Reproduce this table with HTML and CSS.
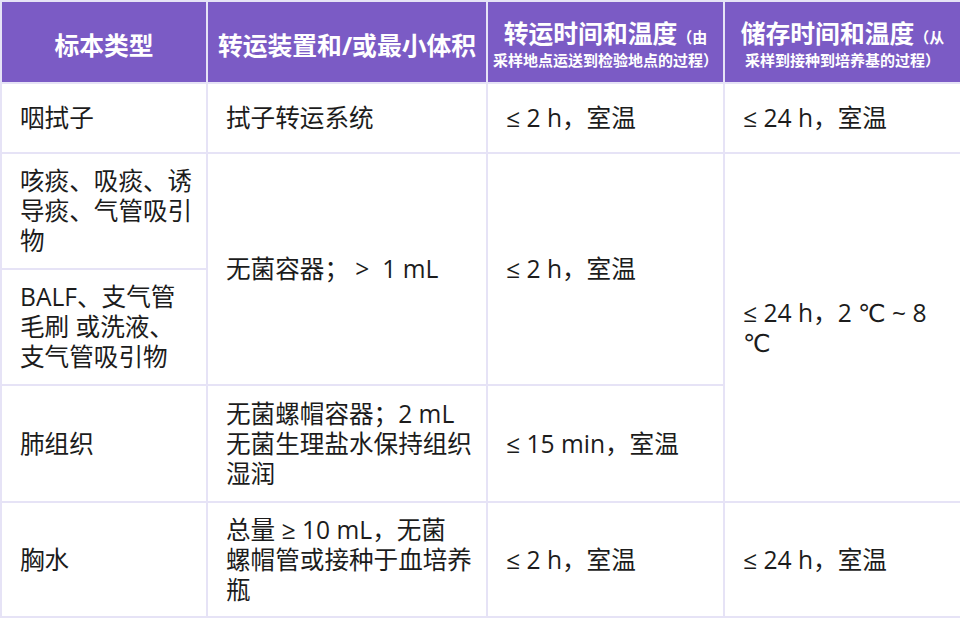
FILE: index.html
```html
<!DOCTYPE html>
<html lang="zh">
<head>
<meta charset="utf-8">
<title>标本类型</title>
<link rel="stylesheet" href="styles.css">
</head>
<body>
<table class="spec">
  <colgroup>
    <col class="c1"><col class="c2"><col class="c3"><col class="c4">
  </colgroup>
  <thead>
    <tr class="r-head">
      <th>标本类型</th>
      <th>转运装置和/或最小体积</th>
      <th><span class="h-main">转运时间和温度<small>（由</small></span><span class="h-sub">采样地点运送到检验地点的过程）</span></th>
      <th><span class="h-main">储存时间和温度<small>（从</small></span><span class="h-sub">采样到接种到培养基的过程）</span></th>
    </tr>
  </thead>
  <tbody>
    <tr class="r1">
      <td>咽拭子</td>
      <td>拭子转运系统</td>
      <td>≤ 2 h，室温</td>
      <td>≤ 24 h，室温</td>
    </tr>
    <tr class="r2">
      <td>咳痰、吸痰、诱<br>导痰、气管吸引<br>物</td>
      <td rowspan="2">无菌容器；&nbsp;&gt;&nbsp; 1 mL</td>
      <td rowspan="2">≤ 2 h，室温</td>
      <td rowspan="3" class="wrap">≤ 24 h，2 ℃ ~ 8 ℃</td>
    </tr>
    <tr class="r3">
      <td>BALF、支气管<br>毛刷 或洗液、<br>支气管吸引物</td>
    </tr>
    <tr class="r4">
      <td>肺组织</td>
      <td>无菌螺帽容器；2 mL<br>无菌生理盐水保持组织<br>湿润</td>
      <td>≤ 15 min，室温</td>
    </tr>
    <tr class="r5">
      <td>胸水</td>
      <td>总量 ≥ 10 mL，无菌<br>螺帽管或接种于血培养<br>瓶</td>
      <td>≤ 2 h，室温</td>
      <td>≤ 24 h，室温</td>
    </tr>
  </tbody>
</table>
</body>
</html>
```

FILE: styles.css
```css
html, body {
  margin: 0;
  padding: 0;
  background: #ffffff;
}

body {
  font-family: "Open Sans", "DejaVu Sans", "Noto Sans CJK SC", sans-serif;
  color: #1c1c1c;
  width: 960px;
  height: 618px;
  overflow: hidden;
}

.spec {
  border-collapse: collapse;
  table-layout: fixed;
  width: 960px;
}

.c1 { width: 206px; }
.c2 { width: 280px; }
.c3 { width: 237px; }
.c4 { width: 237px; }

.spec th,
.spec td {
  border: 2px solid #e6e3f6;
  vertical-align: middle;
}

.spec th {
  background: #7b5bc5;
  color: #ffffff;
  font-weight: 700;
  font-size: 24.8px;
  line-height: 26px;
  text-align: center;
  white-space: nowrap;
  padding: 6px 0 0 0;
}

.h-main {
  display: block;
  line-height: 26px;
}

.h-main small {
  font-size: 15px;
  font-weight: 700;
}

.h-sub {
  display: block;
  font-size: 15px;
  line-height: 20px;
}

.spec td {
  font-size: 24.6px;
  line-height: 30px;
  text-align: left;
  padding: 0 8px 0 18px;
  white-space: nowrap;
}

.spec td.wrap {
  white-space: normal;
  padding-right: 20px;
}

.r-head { height: 82px; }
.r1 { height: 70px; }
.r2 { height: 116px; }
.r3 { height: 116px; }
.r4 { height: 117px; }
.r5 { height: 115px; }
```
